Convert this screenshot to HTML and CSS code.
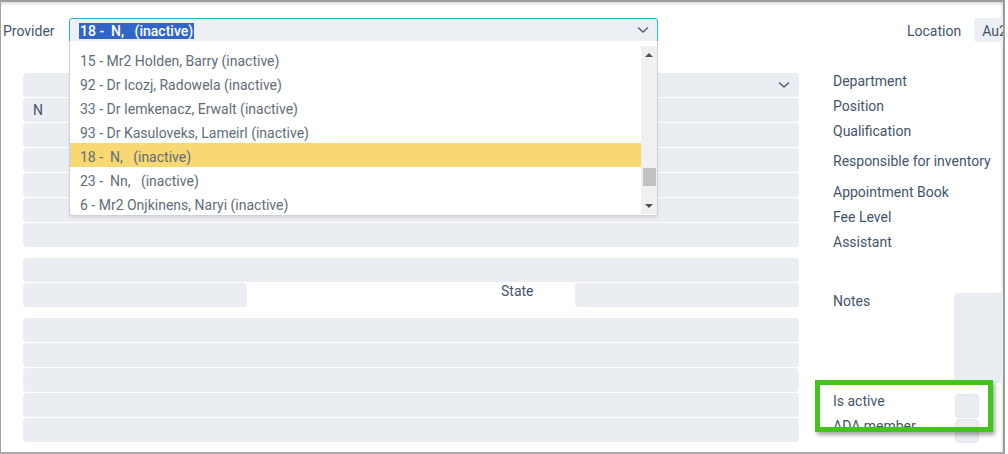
FILE: index.html
```html
<!DOCTYPE html>
<html>
<head>
<meta charset="utf-8">
<link rel="stylesheet" href="styles.css">
</head>
<body>
<div class="frame">
  <header class="top">
    <span class="lbl provider-lbl">Provider</span>
    <div class="select-wrap">
      <div class="select">
        <span class="sel-text">18 -  N,   (inactive)</span>
        <svg class="chev" width="12" height="8" viewBox="0 0 12 8"><path d="M1 1.5 L6 6 L11 1.5" fill="none" stroke="#4f5f72" stroke-width="1.4"/></svg>
      </div>
      <div class="dropdown">
        <ul class="items">
          <li>15 - Mr2 Holden, Barry (inactive)</li>
          <li>92 - Dr Icozj, Radowela (inactive)</li>
          <li>33 - Dr Iemkenacz, Erwalt (inactive)</li>
          <li>93 - Dr Kasuloveks, Lameirl (inactive)</li>
          <li class="active">18 -  N,   (inactive)</li>
          <li>23 -  Nn,   (inactive)</li>
          <li>6 - Mr2 Onjkinens, Naryi (inactive)</li>
        </ul>
        <div class="scrollbar">
          <span class="arrow up"></span>
          <span class="thumb"></span>
          <span class="arrow down"></span>
        </div>
      </div>
    </div>
    <span class="lbl loc-lbl">Location</span>
    <div class="input loc">Au2</div>
  </header>

  <main class="body">
    <section class="left">
      <div class="group">
        <div class="field combo">
          <svg class="chev" width="12" height="8" viewBox="0 0 12 8"><path d="M1 1.5 L6 6 L11 1.5" fill="none" stroke="#4f5f72" stroke-width="1.4"/></svg>
        </div>
        <div class="field"><span class="val">N</span></div>
        <div class="field"></div>
        <div class="field"></div>
        <div class="field"></div>
        <div class="field"></div>
        <div class="field"></div>
      </div>
      <div class="group">
        <div class="field"></div>
        <div class="split">
          <div class="field"></div>
          <span class="lbl state-lbl">State</span>
          <div class="field"></div>
        </div>
      </div>
      <div class="group">
        <div class="field"></div>
        <div class="field"></div>
        <div class="field"></div>
        <div class="field"></div>
        <div class="field"></div>
      </div>
    </section>

    <section class="right">
      <div class="row h25"><span class="lbl rl">Department</span></div>
      <div class="row h25"><span class="lbl rl">Position</span></div>
      <div class="row h30"><span class="lbl rl">Qualification</span></div>
      <div class="row h31"><span class="lbl rl">Responsible for inventory</span></div>
      <div class="row h25"><span class="lbl rl">Appointment Book</span></div>
      <div class="row h25"><span class="lbl rl">Fee Level</span></div>
      <div class="row h59"><span class="lbl rl">Assistant</span></div>
      <div class="row h100"><span class="lbl rl">Notes</span><div class="notes"></div></div>
      <div class="row h25"><span class="lbl rl">Is active</span><div class="check"></div></div>
      <div class="row h25"><span class="lbl rl">ADA member</span><div class="check"></div></div>
    </section>
  </main>

  <div class="highlight"></div>
</div>
</body>
</html>
```

FILE: styles.css
```css
* { box-sizing: border-box; }

html, body {
  margin: 0;
  padding: 0;
  background: #ffffff;
}

body {
  font-family: Roboto, "Liberation Sans", sans-serif;
  font-size: 14px;
  color: #435569;
}

.frame {
  position: relative;
  width: 1005px;
  height: 454px;
  border-top: 2px solid #9c9c9c;
  border-left: 1px solid #a4a4a4;
  border-right: 2px solid #9c9c9c;
  border-bottom: 2px solid #a8a8a8;
  overflow: hidden;
  box-shadow: inset 0 4px 4px -3px rgba(0,0,0,0.18), inset -3px 0 4px -3px rgba(0,0,0,0.18);
}

.lbl {
  line-height: 16px;
  white-space: nowrap;
}

/* header */
.top {
  display: flex;
  align-items: center;
  padding: 16px 0 0 2px;
  height: 40px;
}

.provider-lbl {
  width: 66px;
  flex: none;
  margin-top: 2px;
}

.select-wrap {
  position: relative;
  flex: none;
  width: 589px;
  height: 24px;
}

.select {
  display: flex;
  align-items: center;
  height: 24px;
  padding: 0 8px 0 9px;
  background: #eceff3;
  border: 1px solid #2cb4d6;
  border-radius: 3px 3px 0 0;
}

.sel-text {
  white-space: pre;
  background: #3166c8;
  color: #ffffff;
  font-weight: 500;
  line-height: 16px;
  padding: 0 1px;
  margin-top: 2px;
}

.select .chev {
  margin-left: auto;
}

.dropdown {
  position: absolute;
  left: 0;
  top: 23px;
  width: 589px;
  height: 175px;
  background: #ffffff;
  border: 1px solid #cdd2d9;
  border-top: none;
  border-radius: 0 0 3px 3px;
  box-shadow: 0 2px 3px rgba(0,0,0,0.08);
  z-index: 5;
}

.items {
  list-style: none;
  margin: 0;
  padding: 6px 0 0 0;
  width: 571px;
}

.items li {
  height: 24px;
  line-height: 20px;
  padding: 4px 0 0 10px;
  white-space: pre;
  color: #626c77;
}

.items li.active {
  background: #f8d872;
}

.scrollbar {
  position: absolute;
  right: 0;
  top: 5px;
  bottom: 1px;
  width: 16px;
  background: #f0f0f0;
}

.arrow {
  position: absolute;
  left: 4px;
  width: 0;
  height: 0;
  border-left: 4px solid transparent;
  border-right: 4px solid transparent;
}

.arrow.up {
  top: 7px;
  border-bottom: 4px solid #505050;
}

.arrow.down {
  bottom: 6px;
  border-top: 4px solid #505050;
}

.thumb {
  position: absolute;
  left: 2px;
  width: 13px;
  top: 122px;
  height: 18px;
  background: #c1c1c1;
}

.loc-lbl {
  margin-left: 249px;
  flex: none;
  margin-top: 2px;
}

.input.loc {
  flex: none;
  margin-left: 13px;
  width: 70px;
  height: 24px;
  line-height: 24px;
  padding: 1px 0 0 8px;
  background: #eceff3;
  border-radius: 4px;
}

/* body */
.body {
  display: flex;
  align-items: flex-start;
  padding: 31px 0 0 22px;
}

.left {
  width: 776px;
  flex: none;
  display: flex;
  flex-direction: column;
  gap: 11px;
}

.group {
  display: flex;
  flex-direction: column;
  gap: 1px;
}

.field {
  height: 24px;
  background: #eaedf2;
  border-radius: 4px;
  display: flex;
  align-items: center;
  padding: 0 9px 0 10px;
}

.field.combo .chev {
  margin-left: auto;
}

.val {
  color: #435569;
}

.split {
  display: flex;
  align-items: flex-start;
}

.split .field {
  width: 224px;
  flex: none;
}

.state-lbl {
  width: 328px;
  padding-left: 254px;
  flex: none;
}

.right {
  margin-left: 34px;
  display: flex;
  flex-direction: column;
  flex: none;
  width: 300px;
}

.row {
  display: flex;
  align-items: flex-start;
}

.h25 { height: 25px; }
.h30 { height: 30px; }
.h31 { height: 31px; }
.h59 { height: 59px; }
.h100 { height: 100px; }

.rl {
  width: 121px;
  flex: none;
}

.notes {
  width: 80px;
  height: 90px;
  background: #eaedf2;
  border-radius: 4px;
}

.check {
  margin: 1px 0 0 1px;
  width: 24px;
  height: 24px;
  background: #eaedf2;
  border: 1px solid #e1e5eb;
  border-radius: 4px;
}

.highlight {
  position: absolute;
  left: 814px;
  top: 378px;
  width: 178px;
  height: 52px;
  border: 5px solid #42c41b;
  box-shadow: 2px 3px 4px rgba(0,0,0,0.35);
  pointer-events: none;
  z-index: 6;
}
```
